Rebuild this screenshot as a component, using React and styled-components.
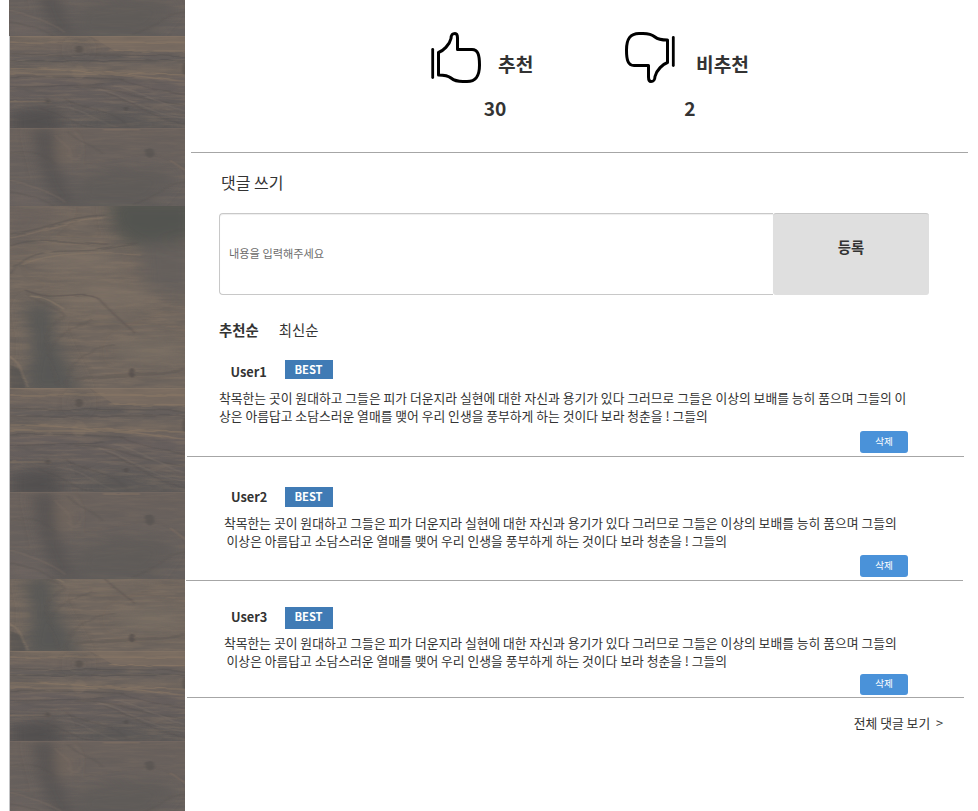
import React from "react";
import styled, { createGlobalStyle } from "styled-components";

const GlobalStyle = createGlobalStyle`
  * { box-sizing: border-box; }
  body {
    margin: 0;
    background: #fff;
    color: #333;
    font-family: "Noto Sans CJK KR", "Noto Sans", sans-serif;
    overflow: hidden;
  }
`;

const Page = styled.div`
  display: flex;
  width: 978px;
  height: 811px;
  padding-left: 9px;
  overflow: hidden;
`;

const WoodWall = styled.svg`
  display: block;
  flex: none;
  width: 176px;
  height: 811px;
`;

const Content = styled.main`
  display: flex;
  flex-direction: column;
  width: 793px;
`;

const Votes = styled.section`
  display: flex;
  height: 152px;
  padding: 31px 0 0 245px;
`;

const Vote = styled.div`
  width: 194px;
`;

const VoteHead = styled.div`
  display: flex;
  height: 54px;
  gap: ${(p) => p.$gap}px;
`;

const ThumbIcon = styled.svg`
  flex: none;
  width: 52px;
  height: 52px;
  margin-top: ${(p) => (p.$down ? 1 : 0)}px;
  fill: none;
  stroke: #000;
  stroke-width: 3;
  stroke-linejoin: round;
  transform: ${(p) => (p.$down ? "rotate(180deg)" : "none")};
`;

const VoteLabel = styled.span`
  padding-top: 18px;
  font-size: 19.2px;
  font-weight: 700;
  line-height: 30px;
  white-space: nowrap;
`;

const VoteCount = styled.div`
  width: ${(p) => p.$width}px;
  padding-top: 8px;
  font-size: 19.2px;
  font-weight: 700;
  line-height: 30px;
  text-align: center;
`;

const Rule = styled.hr`
  flex: none;
  width: 777px;
  height: 1px;
  margin: 0 0 0 ${(p) => p.$left}px;
  border: 0;
  background: #a6a6a6;
`;

const Title = styled.h2`
  height: 60px;
  margin: 0;
  padding: 17px 0 0 36px;
  font-size: 16px;
  font-weight: 400;
  line-height: 24px;
`;

const Composer = styled.form`
  display: flex;
  width: 710px;
  height: 82px;
  margin-left: 34px;
`;

const CommentInput = styled.input`
  width: 554px;
  height: 82px;
  padding: 0 10px 2px 9px;
  border: 1px solid #c8c8c8;
  border-right: 0;
  border-radius: 4px 0 0 4px;
  background: #fff;
  box-shadow: inset 0 1px 1px rgba(0, 0, 0, 0.07);
  color: #333;
  font: 11.2px "Noto Sans CJK KR", sans-serif;
  outline: none;
  &::placeholder { color: #6c6c6c; opacity: 1; }
`;

const SubmitButton = styled.button`
  width: 156px;
  height: 82px;
  padding: 0 0 16px;
  border: 0;
  border-top: 1px solid #c8c8c8;
  border-radius: 3px;
  background: #dfdfdf;
  color: #333;
  font: 700 14.4px "Noto Sans CJK KR", sans-serif;
`;

const SortTabs = styled.nav`
  display: flex;
  height: 63px;
  padding: 24px 0 0 34px;
  gap: 20px;
`;

const SortTab = styled.span`
  font-size: 14.4px;
  font-weight: ${(p) => (p.$active ? 700 : 400)};
  line-height: 22px;
`;

const Comment = styled.article`
  height: ${(p) => p.$height}px;
  padding-top: ${(p) => p.$top}px;
`;

const CommentHead = styled.header`
  display: flex;
  height: 20px;
  margin-bottom: ${(p) => p.$after}px;
`;

const UserName = styled.strong`
  width: ${(p) => 100 - p.$left}px;
  margin-left: ${(p) => p.$left}px;
  padding-top: ${(p) => p.$drop}px;
  font-size: 12.8px;
  line-height: 20px;
`;

const Badge = styled.span`
  width: 48px;
  height: ${(p) => p.$height}px;
  padding-right: 1px;
  background: #407bb5;
  color: #fff;
  font-size: 11.2px;
  font-weight: 700;
  line-height: 19px;
  text-align: center;
`;

const CommentLine = styled.p`
  margin: 0 0 0 ${(p) => p.$left}px;
  font-size: 12.8px;
  line-height: 18px;
  white-space: pre;
`;

const DeleteButton = styled.button`
  display: block;
  width: 48px;
  height: ${(p) => p.$height}px;
  margin: ${(p) => p.$gap}px 0 0 675px;
  padding: 0 0 3px;
  border: 0;
  border-radius: 3px;
  background: #4a92d9;
  color: #fff;
  font: 9.6px/18px "Noto Sans CJK KR", sans-serif;
`;

const MoreLink = styled.div`
  padding: 14px 35px 0 0;
  font-size: 12.8px;
  line-height: 22px;
  text-align: right;
  white-space: pre;
`;

const comments = [
  {
    user: "User1", height: 98, top: 2, nameLeft: 45.5, nameDrop: 2, badge: 19, after: 9,
    lines: [
      [34, "착목한는 곳이 원대하고 그들은 피가 더운지라 실현에 대한 자신과 용기가 있다 그러므로 그들은 이상의 보배를 능히 품으며 그들의 이"],
      [34, "상은 아름답고 소담스러운 열매를 맺어 우리 인생을 풍부하게 하는 것이다 보라 청춘을 ! 그들의"],
    ],
    gap: 6, button: 22, rule: 2,
  },
  {
    user: "User2", height: 123, top: 30, nameLeft: 46, nameDrop: 0, badge: 20, after: 7,
    lines: [
      [39, "착목한는 곳이 원대하고 그들은 피가 더운지라 실현에 대한 자신과 용기가 있다 그러므로 그들은 이상의 보배를 능히 품으며 그들의"],
      [41.6, "이상은 아름답고 소담스러운 열매를 맺어 우리 인생을 풍부하게 하는 것이다 보라 청춘을 ! 그들의"],
    ],
    gap: 5, button: 22, rule: 1,
  },
  {
    user: "User3", height: 116, top: 26, nameLeft: 46, nameDrop: 0, badge: 22, after: 7,
    lines: [
      [39, "착목한는 곳이 원대하고 그들은 피가 더운지라 실현에 대한 자신과 용기가 있다 그러므로 그들은 이상의 보배를 능히 품으며 그들의"],
      [41.6, "이상은 아름답고 소담스러운 열매를 맺어 우리 인생을 풍부하게 하는 것이다 보라 청춘을 ! 그들의"],
    ],
    gap: 4, button: 21, rule: 2,
  },
];

function Thumb({ down }) {
  return (
    <ThumbIcon viewBox="0 0 52 52" $down={down} aria-hidden="true">
      <path d="M2.700 18.500V46.500" strokeLinecap="round" strokeWidth="2.800" />
      <path d="M8.500 44V21.500C13 20 19.500 14 21 7.500C21.200 4 22 2.500 25 2.500C27.500 2.500 27.500 5 27.500 7V18.500H42C48 18.500 49.500 24 49.500 34C49.500 45 46 50.500 37 50.500H33C28 50.500 24 49.500 21 47C18 44.500 15 44 8.500 44Z" />
    </ThumbIcon>
  );
}

// Three plank drawings, stacked repeatedly at slightly different scales.
function Wood() {
  return (
    <WoodWall viewBox="0 0 176 811" aria-hidden="true">
      <defs>
        <filter id="soft" x="-50%" y="-50%" width="200%" height="200%">
          <feGaussianBlur stdDeviation="8" />
        </filter>
        <filter id="fine" x="-20%" y="-20%" width="140%" height="140%">
          <feTurbulence type="fractalNoise" baseFrequency="0.03 0.09" numOctaves="3" seed="4" />
          <feDisplacementMap in="SourceGraphic" scale="4" />
          <feGaussianBlur stdDeviation="1.1 0.7" />
        </filter>
        <filter id="grain" x="0" y="0" width="100%" height="100%" colorInterpolationFilters="sRGB">
          <feTurbulence type="fractalNoise" baseFrequency="0.03 0.3" numOctaves="5" seed="8" />
          <feColorMatrix values="0 0 0 0 .55  0 0 0 0 .48  0 0 0 0 .41  3 0 0 0 -1.2" />
        </filter>
        <filter id="shade" x="0" y="0" width="100%" height="100%" colorInterpolationFilters="sRGB">
          <feTurbulence type="fractalNoise" baseFrequency="0.025 0.13" numOctaves="5" seed="21" />
          <feColorMatrix values="0 0 0 0 .34  0 0 0 0 .33  0 0 0 0 .33  2.6 0 0 0 -1.1" />
        </filter>
        <linearGradient id="streakBase" x2="0" y2="1">
          <stop offset="0" stopColor="#75695f" />
          <stop offset=".14" stopColor="#6e645e" />
          <stop offset=".25" stopColor="#645e5c" />
          <stop offset=".38" stopColor="#73685f" />
          <stop offset=".5" stopColor="#675f5d" />
          <stop offset="1" stopColor="#625d5b" />
        </linearGradient>
        <linearGradient id="plainBase" x2="0" y2="1">
          <stop offset="0" stopColor="#6b625d" />
          <stop offset="1" stopColor="#645f5d" />
        </linearGradient>

        <symbol id="swirl" viewBox="0 0 175 182" preserveAspectRatio="none">
          <rect width="175" height="182" fill="#71675f" />
          <rect width="175" height="182" filter="url(#grain)" opacity=".35" />
          <rect width="175" height="182" filter="url(#shade)" opacity=".3" />
          <g filter="url(#soft)">
            <path d="M98 -8H185V34L120 40L104 24Z" fill="#51524f" opacity=".95" />
            <path d="M130 38H185V95L135 85Z" fill="#615e5c" opacity=".75" />
            <path d="M14 98L46 98L42 125L74 190H14L22 140Z" fill="#565755" opacity=".95" />
            <path d="M-5 0H60L0 45Z" fill="#655e5b" opacity=".6" />
            <ellipse cx="70" cy="55" rx="45" ry="10" fill="#84766a" opacity=".6" />
            <ellipse cx="95" cy="90" rx="50" ry="13" fill="#827568" opacity=".6" />
            <ellipse cx="140" cy="145" rx="35" ry="12" fill="#7a6f65" opacity=".6" />
          </g>
          <g fill="none" filter="url(#fine)" strokeWidth="1.500" opacity=".7">
            <path d="M0 28C38 24 55 10 96 9M0 68C15 47 33 45 65 45S105 40 128 38M0 40C30 29 65 38 98 38" stroke="#5a5553" opacity=".7" />
            <path d="M0 32C30 28 60 12 93 12M12 59C40 45 100 46 130 48" stroke="#94816c" opacity=".45" />
            <path d="M15 84C45 98 70 82 88 92C101 106 112 116 124 126" stroke="#57504e" opacity=".7" />
            <path d="M18 88C25 98 48 100 55 110C30 120 35 135 48 180M40 146C50 128 70 119 81 112M55 180C60 155 80 140 105 139" stroke="#5d5754" opacity=".5" />
            <path d="M0 151C13 158 12 170 18 181M20 90C38 91 48 100 54 103" stroke="#94826e" opacity=".7" />
            <path d="M65 174C100 166 130 172 175 164" stroke="#615955" strokeWidth="3" opacity=".7" />
          </g>
          <ellipse cx="122" cy="167" rx="3" ry="5" fill="#4f4a48" opacity=".6" filter="url(#fine)" />
          <path d="M0 159Q14 161 15 182H0Z" fill="#4d4e4d" opacity=".5" filter="url(#fine)" />
        </symbol>

        <symbol id="streaks" viewBox="0 0 175 104" preserveAspectRatio="none">
          <rect width="175" height="104" fill="url(#streakBase)" />
          <rect width="175" height="104" filter="url(#grain)" opacity=".32" />
          <rect width="175" height="104" filter="url(#shade)" opacity=".4" />
          <path d="M80 0H175V17H105Z" fill="#817164" opacity=".5" />
          <g fill="none" filter="url(#fine)" strokeWidth="1.500" opacity=".6">
            <path d="M0 7H175M100 17H175M0 37C50 36 80 43 175 44M0 43H100C130 43 150 50 175 51M0 74H40" stroke="#988169" opacity=".65" />
            <path d="M0 20C80 24 130 19 175 24M0 28H175M0 47C55 44 100 49 115 49M0 58C45 56 65 56 95 55" stroke="#504c4b" opacity=".6" />
            <path d="M65 58C100 54 145 77 175 78M110 49C135 61 160 62 175 67M95 64C125 73 135 91 175 100M30 82C55 88 68 104 83 103M55 72C85 87 105 83 118 103" stroke="#544f4d" opacity=".55" />
            <path d="M88 60C120 67 140 90 175 93M45 78C80 83 90 100 108 103M103 55C140 67 150 76 175 85" stroke="#83776d" opacity=".5" />
          </g>
          <g filter="url(#soft)" fill="#4f4e4d">
            <path d="M28 80H50L53 112H0V88Z" opacity=".85" />
            <ellipse cx="69" cy="15" rx="9" ry="6" opacity=".5" />
            <path d="M105 84L175 102V107H60L85 90Z" opacity=".45" />
          </g>
          <g filter="url(#fine)" fill="#4c4745" opacity=".42">
            <circle cx="69" cy="15" r="4" />
            <circle cx="37" cy="73" r="2.500" />
            <circle cx="116" cy="82" r="2.500" />
            <ellipse cx="175" cy="37" rx="3" ry="7" />
          </g>
          <ellipse cx="69" cy="41" rx="7" ry="8" fill="#8f7d6b" opacity=".2" filter="url(#fine)" />
          <path d="M0 .5H175" stroke="#8a7969" opacity=".5" />
        </symbol>

        <symbol id="plain" viewBox="0 0 175 87" preserveAspectRatio="none">
          <rect width="175" height="87" fill="url(#plainBase)" />
          <rect width="175" height="87" filter="url(#grain)" opacity=".16" />
          <rect width="175" height="87" filter="url(#shade)" opacity=".2" />
          <g filter="url(#soft)">
            <path d="M22 0H43L48 47L65 87H48L33 50Z" fill="#51504f" opacity=".85" />
            <path d="M70 55L140 43L165 55L140 87H65Z" fill="#5c5957" opacity=".6" />
            <path d="M0 65L45 87H0Z" fill="#756762" opacity=".6" />
            <ellipse cx="54" cy="25" rx="6" ry="15" fill="#7d6d61" opacity=".7" />
          </g>
          <g fill="none" filter="url(#fine)" strokeWidth="1.800" opacity=".55">
            <path d="M45 8C51 18 64 20 60 37M0 59C25 65 50 75 55 83M57 30C72 44 80 20 65 5" stroke="#7e7065" opacity=".6" />
            <path d="M58 5C70 17 86 20 92 28M0 71C20 75 36 81 44 87M0 28C25 23 36 31 45 40M123 85C146 78 157 61 175 60" stroke="#55514f" opacity=".5" />
            <path d="M93 2H130M160 36L175 47" stroke="#8b7867" opacity=".7" />
          </g>
          <ellipse cx="140" cy="28" rx="4.500" ry="5.500" fill="#504d4c" opacity=".45" filter="url(#fine)" />
          <path d="M0 .5H175" stroke="#7d7067" opacity=".4" />
        </symbol>
      </defs>
      <rect width="1" height="811" fill="#c3c4c6" />
      <use href="#plain" x="0" y="-42" width="176" height="78" />
      <use href="#streaks" x="1" y="36" width="175" height="92" />
      <use href="#plain" x="1" y="128" width="175" height="78" />
      <use href="#swirl" x="1" y="493" width="175" height="158" />
      <use href="#swirl" x="1" y="206" width="175" height="182" />
      <use href="#streaks" x="1" y="388" width="175" height="104" />
      <use href="#plain" x="1" y="492" width="175" height="87" />
      <use href="#streaks" x="1" y="651" width="175" height="90" />
      <use href="#plain" x="1" y="741" width="175" height="77" />
    </WoodWall>
  );
}

export default function App() {
  return (
    <>
      <GlobalStyle />
      <Page>
        <Wood />
        <Content>
          <Votes>
            <Vote>
              <VoteHead $gap={16}>
                <Thumb />
                <VoteLabel>추천</VoteLabel>
              </VoteHead>
              <VoteCount $width={130}>30</VoteCount>
            </Vote>
            <Vote>
              <VoteHead $gap={20}>
                <Thumb down />
                <VoteLabel>비추천</VoteLabel>
              </VoteHead>
              <VoteCount $width={132}>2</VoteCount>
            </Vote>
          </Votes>
          <Rule $left={6} />
          <Title>댓글 쓰기</Title>
          <Composer onSubmit={(e) => e.preventDefault()}>
            <CommentInput placeholder="내용을 입력해주세요" />
            <SubmitButton type="submit">등록</SubmitButton>
          </Composer>
          <SortTabs>
            <SortTab $active>추천순</SortTab>
            <SortTab>최신순</SortTab>
          </SortTabs>
          {comments.map((c) => (
            <React.Fragment key={c.user}>
              <Comment $height={c.height} $top={c.top}>
                <CommentHead $after={c.after}>
                  <UserName $left={c.nameLeft} $drop={c.nameDrop}>{c.user}</UserName>
                  <Badge $height={c.badge}>BEST</Badge>
                </CommentHead>
                {c.lines.map(([left, text]) => (
                  <CommentLine key={text} $left={left}>{text}</CommentLine>
                ))}
                <DeleteButton type="button" $gap={c.gap} $height={c.button}>삭제</DeleteButton>
              </Comment>
              <Rule $left={c.rule} />
            </React.Fragment>
          ))}
          <MoreLink>{"전체 댓글 보기  >"}</MoreLink>
        </Content>
      </Page>
    </>
  );
}
